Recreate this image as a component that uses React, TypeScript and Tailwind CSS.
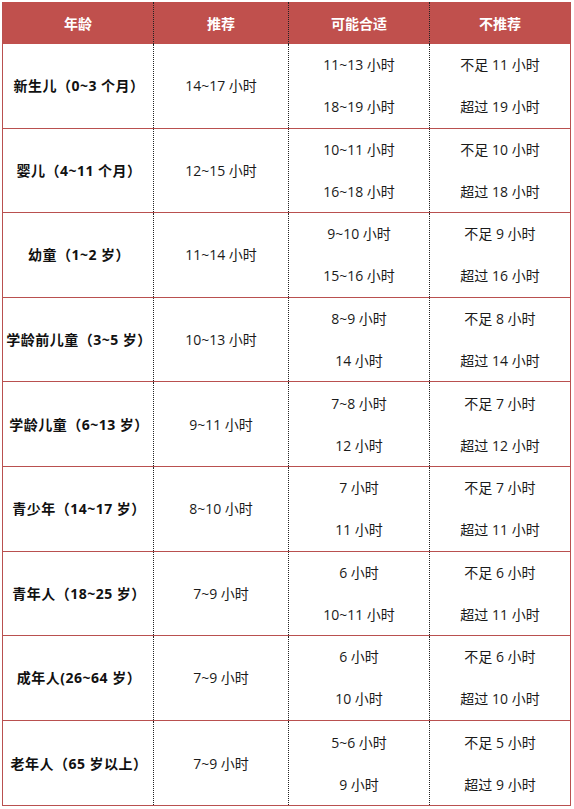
const header = ["年龄", "推荐", "可能合适", "不推荐"];

interface Row {
  age: string;
  rec: string;
  maybe: [string, string];
  not: [string, string];
}

const rows: Row[] = [
  { age: "新生儿（0~3 个月）", rec: "14~17 小时", maybe: ["11~13 小时", "18~19 小时"], not: ["不足 11 小时", "超过 19 小时"] },
  { age: "婴儿（4~11 个月）", rec: "12~15 小时", maybe: ["10~11 小时", "16~18 小时"], not: ["不足 10 小时", "超过 18 小时"] },
  { age: "幼童（1~2 岁）", rec: "11~14 小时", maybe: ["9~10 小时", "15~16 小时"], not: ["不足 9 小时", "超过 16 小时"] },
  { age: "学龄前儿童（3~5 岁）", rec: "10~13 小时", maybe: ["8~9 小时", "14 小时"], not: ["不足 8 小时", "超过 14 小时"] },
  { age: "学龄儿童（6~13 岁）", rec: "9~11 小时", maybe: ["7~8 小时", "12 小时"], not: ["不足 7 小时", "超过 12 小时"] },
  { age: "青少年（14~17 岁）", rec: "8~10 小时", maybe: ["7 小时", "11 小时"], not: ["不足 7 小时", "超过 11 小时"] },
  { age: "青年人（18~25 岁）", rec: "7~9 小时", maybe: ["6 小时", "10~11 小时"], not: ["不足 6 小时", "超过 11 小时"] },
  { age: "成年人(26~64 岁）", rec: "7~9 小时", maybe: ["6 小时", "10 小时"], not: ["不足 6 小时", "超过 10 小时"] },
  { age: "老年人（65 岁以上）", rec: "7~9 小时", maybe: ["5~6 小时", "9 小时"], not: ["不足 5 小时", "超过 9 小时"] },
];

const cols = ["w-[150px]", "w-[135px]", "w-[141px]", "flex-1"];

function Pair({ items }: { items: [string, string] }) {
  return (
    <div className="flex flex-col items-center gap-[22px] pt-[1px]">
      <span className="leading-[20px]">{items[0]}</span>
      <span className="leading-[20px]">{items[1]}</span>
    </div>
  );
}

export default function App() {
  return (
    <div className="bg-white w-[574px] h-[809px] pt-[2px] pl-[2px]">
      <div
        className="w-[569px] border border-t-0 border-[#b9504f] text-[14px] text-[#1a1a1a]"
        style={{ fontFamily: '"Open Sans", "Noto Sans CJK SC", sans-serif' }}
      >
        <div className="flex h-[42px] bg-[#c0504d] text-white font-bold">
          {header.map((h, i) => (
            <div
              key={h}
              className={`${cols[i]} flex items-center justify-center ${i > 0 ? "border-l border-dotted border-[#222]" : ""}`}
            >
              {h}
            </div>
          ))}
        </div>
        {rows.map((r, idx) => (
          <div
            key={r.age}
            className={`flex h-[84.6px] ${idx < rows.length - 1 ? "border-b border-[#b9504f]" : ""}`}
          >
            <div className="w-[150px] flex items-center justify-center font-bold text-[#111] pl-[2px] tracking-[0.5px]">{r.age}</div>
            <div className="w-[135px] flex items-center justify-center border-l border-dotted border-[#222]">{r.rec}</div>
            <div className="w-[141px] flex items-center justify-center border-l border-dotted border-[#222]">
              <Pair items={r.maybe} />
            </div>
            <div className="flex-1 flex items-center justify-center border-l border-dotted border-[#222]">
              <Pair items={r.not} />
            </div>
          </div>
        ))}
      </div>
    </div>
  );
}
